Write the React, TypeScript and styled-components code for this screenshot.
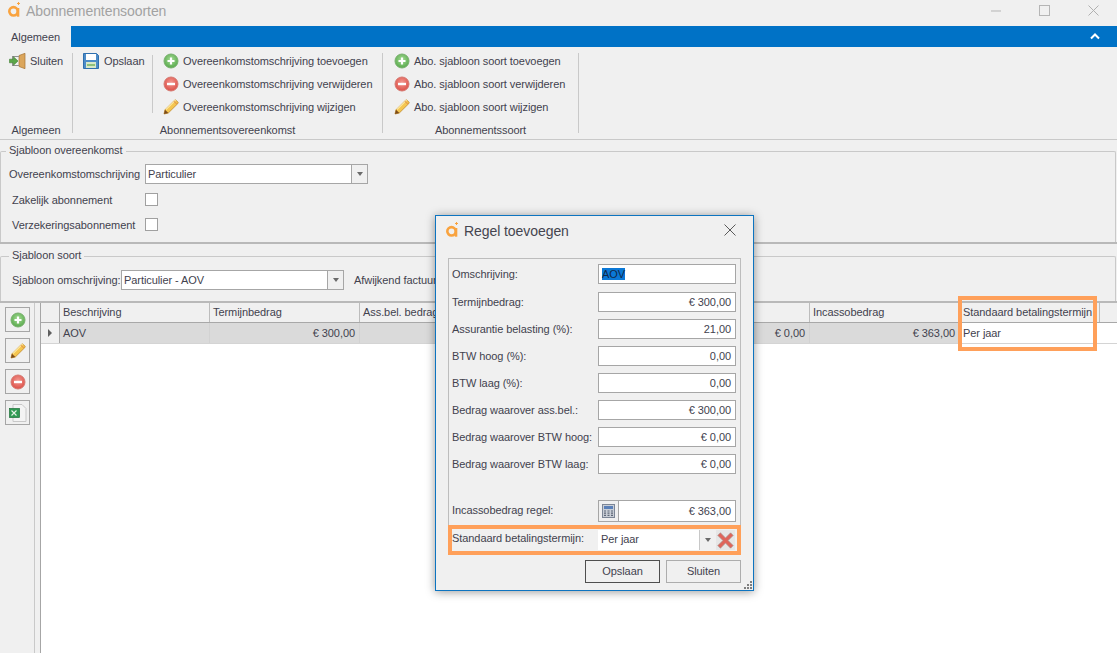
import React from "react";
import styled, { createGlobalStyle } from "styled-components";

const Global = createGlobalStyle`
  html, body { margin: 0; padding: 0; background: #f0f0f0; }
  * { box-sizing: border-box; }
`;

const TEXT = "#42424e";
const LINE = "#c9c9c9";
const BOX = "#a6a6a6";
const ORANGE = "#ffa05a";

const Page = styled.div`
  position: relative;
  width: 1117px;
  height: 653px;
  overflow: hidden;
  display: flex;
  flex-direction: column;
  background: #f0f0f0;
  color: ${TEXT};
  font: 11px/16px "Liberation Sans", Arial, sans-serif;
  letter-spacing: -0.07px;
  white-space: nowrap;
`;

const TitleBar = styled.div`
  height: 26px;
  display: flex;
  align-items: flex-start;
  padding: 2px 0 0 8px;
`;
const WindowTitle = styled.div`
  margin-left: 2px;
  font-size: 14px;
  line-height: 18px;
  color: #a2a2a2;
`;
const WindowControls = styled.div`
  margin-left: auto;
  display: flex;
  align-items: flex-start;
  gap: 38px;
  padding: 3px 18px 0 0;
  svg { display: block; }
`;

const TabBar = styled.div`
  height: 21px;
  display: flex;
`;
const Tab = styled.div`
  width: 71px;
  text-align: center;
  line-height: 23px;
`;
const TabFill = styled.div`
  flex: 1;
  background: #0072c6;
  display: flex;
  justify-content: flex-end;
  align-items: center;
  padding-right: 17px;
`;

const Ribbon = styled.div`
  height: 93px;
  display: flex;
  padding-top: 6px;
  border-bottom: 1px solid ${LINE};
  align-items: flex-start;
`;
const RibbonGroup = styled.div<{ $w: number }>`
  width: ${(p) => p.$w}px;
  height: 80px;
  display: flex;
  flex-direction: column;
  border-right: 1px solid ${LINE};
`;
const GroupBody = styled.div<{ $pad: number }>`
  flex: 1;
  display: flex;
  align-items: flex-start;
  padding-left: ${(p) => p.$pad}px;
`;
const GroupLabel = styled.div`
  height: 12px;
  margin-bottom: -3px;
  line-height: 12px;
  text-align: center;
`;
const RibbonItem = styled.div<{ $w?: number; $gap: number }>`
  height: 16px;
  ${(p) => (p.$w ? `width: ${p.$w}px;` : "")}
  display: flex;
  align-items: center;
  gap: ${(p) => p.$gap}px;
  svg { flex: none; display: block; }
`;
const ItemStack = styled.div`
  display: flex;
  flex-direction: column;
  gap: 7px;
`;
const InnerDivider = styled.div`
  width: 1px;
  height: 58px;
  margin: 2px 10px 0 0;
  background: ${LINE};
`;

const Group = styled.fieldset<{ $h: number; $legendH: number }>`
  height: ${(p) => p.$h}px;
  margin: 0 1px 0 0;
  padding: 0;
  border: 1px solid ${LINE};
  border-bottom: none;
  border-radius: 2px 2px 0 0;
  min-width: 0;
  position: relative;
  & > legend { line-height: ${(p) => p.$legendH}px; }
`;
const GroupLegend = styled.legend<{ $x: number }>`
  margin-left: ${(p) => p.$x}px;
  padding: 0 3px;
  position: relative;
  top: -1px;
`;
const Splitter = styled.div`
  height: 2px;
  flex: none;
  background: #b9b9b9;
`;
const FormRow = styled.div<{ $mt: number; $pl: number; $h: number }>`
  display: flex;
  align-items: center;
  height: ${(p) => p.$h}px;
  margin-top: ${(p) => p.$mt}px;
  padding-left: ${(p) => p.$pl}px;
`;
const FormLabel = styled.div<{ $w: number }>`
  width: ${(p) => p.$w}px;
  flex: none;
`;
const Combo = styled.div<{ $w: number }>`
  width: ${(p) => p.$w}px;
  height: 20px;
  flex: none;
  display: flex;
  background: #fff;
  border: 1px solid ${BOX};
`;
const ComboText = styled.div`
  flex: 1;
  padding-left: 2px;
  line-height: 18px;
`;
const ComboButton = styled.div`
  width: 16px;
  background: #f0f0f0;
  border-left: 1px solid ${BOX};
  display: flex;
  align-items: center;
  justify-content: center;
`;
const Arrow = styled.span`
  width: 0;
  height: 0;
  border-left: 3.5px solid transparent;
  border-right: 3.5px solid transparent;
  border-top: 4px solid #6a6a6a;
`;
const CheckBox = styled.div`
  width: 13px;
  height: 13px;
  background: #fff;
  border: 1px solid #a0a0a0;
`;
const ClippedText = styled.div`
  margin-left: 10px;
`;

const GridArea = styled.div`
  flex: 1;
  display: flex;
  min-height: 0;
`;
const SideBar = styled.div`
  width: 35px;
  flex: none;
  border-right: 1px solid ${LINE};
  padding: 4px 0 0 5px;
  display: flex;
  flex-direction: column;
  gap: 6px;
`;
const SideButton = styled.div`
  width: 25px;
  height: 25px;
  border: 1px solid ${BOX};
  display: flex;
  align-items: center;
  justify-content: center;
`;
const Table = styled.div`
  flex: 1;
  margin-left: 5px;
  background: #fff;
  border-left: 1px solid ${BOX};
  min-width: 0;
`;
const HeaderRow = styled.div`
  display: flex;
  height: 20px;
  background: #f0f0f0;
  border-bottom: 1px solid #a8a8a8;
`;
const DataRow = styled.div`
  display: flex;
  height: 21px;
  border-bottom: 1px solid #d4d4d4;
`;
const Indicator = styled.div`
  width: 19px;
  flex: none;
  background: #f0f0f0;
  border-right: 1px solid #a8a8a8;
  display: flex;
  align-items: center;
  justify-content: center;
`;
const RowTriangle = styled.span`
  width: 0;
  height: 0;
  border-top: 4px solid transparent;
  border-bottom: 4px solid transparent;
  border-left: 4px solid #5f5f5f;
`;
const HeadCell = styled.div<{ $w: number }>`
  width: ${(p) => p.$w}px;
  flex: none;
  padding-left: 3px;
  border-right: 1px solid #bcbcbc;
  line-height: 19px;
  overflow: hidden;
`;
const Cell = styled.div<{ $w: number; $right?: boolean; $plain?: boolean }>`
  width: ${(p) => p.$w}px;
  flex: none;
  padding: 0 4px 0 3px;
  text-align: ${(p) => (p.$right ? "right" : "left")};
  background: ${(p) => (p.$plain ? "#fff" : "#dadada")};
  border-right: 1px solid ${(p) => (p.$plain ? "#fff" : "#d2d2d2")};
  line-height: 20px;
`;

const Highlight = styled.div`
  position: absolute;
  left: 958px;
  top: 296px;
  width: 139px;
  height: 55px;
  border: 4px solid ${ORANGE};
`;

const Dialog = styled.div`
  position: absolute;
  left: 435px;
  top: 215px;
  width: 319px;
  height: 376px;
  background: #f0f0f0;
  border: 1px solid #0d74c0;
  box-shadow: 0 1px 9px rgba(0, 0, 0, 0.4);
  display: flex;
  flex-direction: column;
`;
const DialogHead = styled.div`
  height: 42px;
  flex: none;
  display: flex;
  align-items: flex-start;
  padding: 6px 17px 0 10px;
`;
const DialogTitle = styled.div`
  margin-left: 2px;
  font-size: 14px;
  line-height: 19px;
  color: #45454f;
`;
const CloseX = styled.div`
  margin-left: auto;
  padding-top: 2px;
  svg { display: block; }
`;
const Panel = styled.div`
  width: 293px;
  margin-left: 12px;
  flex: none;
  border: 1px solid #bdbdbd;
  border-bottom: none;
  padding-top: 5px;
`;
const DialogRow = styled.div<{ $mt: number; $h?: number }>`
  display: flex;
  height: ${(p) => p.$h ?? 20}px;
  margin-top: ${(p) => p.$mt}px;
  padding-left: 3px;
  align-items: center;
`;
const DialogLabel = styled.div<{ $lift?: number }>`
  width: 146px;
  flex: none;
  position: relative;
  top: ${(p) => -(p.$lift ?? 0)}px;
`;
const Field = styled.div<{ $right?: boolean }>`
  width: 138px;
  height: 100%;
  flex: none;
  background: #fff;
  border: 1px solid ${BOX};
  padding: 0 4px 0 3px;
  line-height: 18px;
  text-align: ${(p) => (p.$right ? "right" : "left")};
`;
const Selected = styled.span`
  background: #0a78d6;
  color: #10294a;
`;
const CalcField = styled.div`
  width: 138px;
  height: 100%;
  flex: none;
  display: flex;
  background: #fff;
  border: 1px solid ${BOX};
`;
const CalcButton = styled.div`
  width: 20px;
  flex: none;
  background: #f0f0f0;
  border-right: 1px solid ${BOX};
  display: flex;
  align-items: center;
  justify-content: center;
`;
const CalcValue = styled.div`
  flex: 1;
  text-align: right;
  padding-right: 4px;
  line-height: 20px;
`;
const OrangeRow = styled.div`
  height: 30px;
  margin: 3px -1px 0;
  border: 4px solid ${ORANGE};
  display: flex;
  align-items: center;
`;
const OrangeLabel = styled.div`
  width: 146px;
  flex: none;
  position: relative;
  top: -2px;
`;
const TermCombo = styled.div`
  width: 117px;
  height: 20px;
  flex: none;
  display: flex;
  background: #fff;
`;
const TermText = styled.div`
  flex: 1;
  padding-left: 3px;
  line-height: 19px;
`;
const TermButton = styled.div`
  width: 16px;
  background: #f0f0f0;
  border-left: 1px solid #c8c8c8;
  display: flex;
  align-items: center;
  justify-content: center;
`;
const ClearButton = styled.div`
  width: 19px;
  height: 20px;
  margin-left: 1px;
  display: flex;
  align-items: center;
  justify-content: center;
  background: #e6e6e6;
`;
const DialogButtons = styled.div`
  display: flex;
  justify-content: flex-end;
  gap: 6px;
  margin: 5px 12px 0 0;
`;
const DialogButton = styled.div<{ $primary?: boolean }>`
  width: 75px;
  height: 23px;
  text-align: center;
  line-height: 21px;
  border: 1px solid ${(p) => (p.$primary ? "#4f4f4f" : "#adadad")};
`;
const Grip = styled.svg`
  position: absolute;
  right: 0;
  bottom: 0;
  display: block;
`;

const Logo = () => (
  <svg width="16" height="16" viewBox="0 0 16 16">
    <circle cx="5.500" cy="9.300" r="4.200" fill="none" stroke="#f9a33f" strokeWidth="2.600" />
    <rect x="8.800" y="6" width="2.500" height="8.700" fill="#f9a33f" />
    <path d="M10.500 0v3M9 1.500h3" stroke="#f9a33f" strokeWidth="1" />
  </svg>
);
const PlusIcon = () => (
  <svg width="16" height="16" viewBox="0 0 16 16">
    <defs>
      <radialGradient id="gp" cx="50%" cy="40%" r="60%">
        <stop offset="0" stopColor="#a5dc95" />
        <stop offset="1" stopColor="#58a94c" />
      </radialGradient>
    </defs>
    <circle cx="8" cy="8" r="7" fill="url(#gp)" stroke="#79b06e" strokeWidth="1" />
    <path d="M8 4.500v7M4.500 8h7" stroke="#fff" strokeWidth="2.200" />
  </svg>
);
const MinusIcon = () => (
  <svg width="16" height="16" viewBox="0 0 16 16">
    <defs>
      <radialGradient id="rm" cx="50%" cy="40%" r="60%">
        <stop offset="0" stopColor="#f39a92" />
        <stop offset="1" stopColor="#dc4f47" />
      </radialGradient>
    </defs>
    <circle cx="8" cy="8" r="7" fill="url(#rm)" stroke="#d57a72" strokeWidth="1" />
    <path d="M4 8h8" stroke="#fff" strokeWidth="2.400" />
  </svg>
);
const PencilIcon = () => (
  <svg width="16" height="16" viewBox="0 0 16 16">
    <path d="M1 15l1-4.200L11.600 1.200a1 1 0 0 1 1.400 0l1.900 1.900a1 1 0 0 1 0 1.400L5.300 14z" fill="#f5c650" stroke="#c08a2c" strokeWidth="0.800" />
    <path d="M1 15l1-4.200L5.300 14z" fill="#7a4a1c" />
    <path d="M3 10.500L12.600 1" stroke="#fce8a4" strokeWidth="1.100" />
    <path d="M11 2.300l2.900 2.900" stroke="#e59c4d" strokeWidth="1.200" />
  </svg>
);
const SaveIcon = () => (
  <svg width="16" height="16" viewBox="0 0 16 16">
    <path d="M0.500 0.500h13l2 2v13h-15z" fill="#4d8cc8" stroke="#2f6fae" />
    <rect x="3" y="1" width="10" height="6" fill="#fff" />
    <rect x="3" y="9" width="10" height="6" fill="#d8e8c8" />
    <rect x="4" y="11" width="8" height="2" fill="#8fc07a" />
  </svg>
);
const ExitIcon = () => (
  <svg width="17" height="16" viewBox="0 0 17 16">
    <path d="M10 2.500l6-2.200v15.400l-6-2.200z" fill="#dba65c" stroke="#a87434" strokeWidth="0.700" />
    <path d="M3 3h7v1H4v8h6v1H3z" fill="#8f8f8f" />
    <path d="M0.500 6.200h4V3.800L9 8l-4.500 4.200V9.800h-4z" fill="#5aa648" stroke="#3f7f33" strokeWidth="0.600" />
  </svg>
);
const ExcelIcon = () => (
  <svg width="18" height="18" viewBox="0 0 18 18">
    <path d="M4 0.500h9l4 4v13H4z" fill="#f4f4f4" stroke="#c8c8c8" />
    <rect x="0.500" y="4.500" width="10" height="9" fill="#2f9a52" stroke="#1f7038" strokeWidth="0.700" />
    <path d="M2.500 6.500l5 5M7.500 6.500l-5 5" stroke="#e8f4e8" strokeWidth="1.100" />
  </svg>
);
const CalcIcon = () => (
  <svg width="13" height="14" viewBox="0 0 13 14">
    <rect x="0.500" y="0.500" width="12" height="13" fill="#c9ced6" stroke="#7c8696" />
    <rect x="2" y="2" width="9" height="3" fill="#5a80b8" />
    <path d="M2 7h2M5.500 7h2M9 7h2M2 9.200h2M5.500 9.200h2M9 9.200h2M2 11.400h2M5.500 11.400h2M9 11.400h2" stroke="#5d6676" strokeWidth="1.200" />
  </svg>
);
const RedX = () => (
  <svg width="17" height="17" viewBox="0 0 16 16">
    <path d="M0.800 3.200l2.400-2.400L8 5.600l4.800-4.800 2.400 2.400L10.400 8l4.800 4.800-2.400 2.400L8 10.400l-4.800 4.800-2.400-2.400L5.600 8z" fill="#e0645a" stroke="#a9908c" strokeWidth="0.700" />
  </svg>
);

const ribbonRows = (noun: string) => [
  { icon: <PlusIcon />, text: `${noun} toevoegen` },
  { icon: <MinusIcon />, text: `${noun} verwijderen` },
  { icon: <PencilIcon />, text: `${noun} wijzigen` },
];

const fields = [
  { label: "Termijnbedrag:", value: "€ 300,00" },
  { label: "Assurantie belasting (%):", value: "21,00" },
  { label: "BTW hoog (%):", value: "0,00" },
  { label: "BTW laag (%):", value: "0,00" },
  { label: "Bedrag waarover ass.bel.:", value: "€ 300,00" },
  { label: "Bedrag waarover BTW hoog:", value: "€ 0,00" },
  { label: "Bedrag waarover BTW laag:", value: "€ 0,00" },
];

const columns = [
  { id: "a", head: "Beschrijving", value: "AOV", right: false },
  { id: "b", head: "Termijnbedrag", value: "€ 300,00", right: true },
  { id: "c", head: "Ass.bel. bedrag", value: "", right: true },
  { id: "d", head: "", value: "", right: true },
  { id: "e", head: "", value: "€ 0,00", right: true },
  { id: "f", head: "Incassobedrag", value: "€ 363,00", right: true },
];

export default function App() {
  return (
    <Page>
      <Global />
      <TitleBar>
        <Logo />
        <WindowTitle>Abonnementensoorten</WindowTitle>
        <WindowControls>
          <svg width="10" height="11" viewBox="0 0 10 11"><path d="M0 6h10" stroke="#b5b5b5" /></svg>
          <svg width="11" height="11" viewBox="0 0 11 11"><rect x="0.500" y="0.500" width="10" height="10" fill="none" stroke="#b5b5b5" /></svg>
          <svg width="11" height="11" viewBox="0 0 11 11"><path d="M0.500 0.500l10 10M10.500 0.500l-10 10" stroke="#b0b0b0" /></svg>
        </WindowControls>
      </TitleBar>
      <TabBar>
        <Tab>Algemeen</Tab>
        <TabFill>
          <svg width="10" height="7" viewBox="0 0 10 7"><path d="M1 5.500L5 1.500l4 4" fill="none" stroke="#fff" strokeWidth="2" /></svg>
        </TabFill>
      </TabBar>
      <Ribbon>
        <RibbonGroup $w={73}>
          <GroupBody $pad={9}>
            <RibbonItem $gap={4}><ExitIcon /><span>Sluiten</span></RibbonItem>
          </GroupBody>
          <GroupLabel>Algemeen</GroupLabel>
        </RibbonGroup>
        <RibbonGroup $w={310}>
          <GroupBody $pad={10}>
            <RibbonItem $gap={5} $w={69}><SaveIcon /><span>Opslaan</span></RibbonItem>
            <InnerDivider />
            <ItemStack>
              {ribbonRows("Overeenkomstomschrijving").map((r) => (
                <RibbonItem key={r.text} $gap={4}>{r.icon}<span>{r.text}</span></RibbonItem>
              ))}
            </ItemStack>
          </GroupBody>
          <GroupLabel>Abonnementsovereenkomst</GroupLabel>
        </RibbonGroup>
        <RibbonGroup $w={196}>
          <GroupBody $pad={11}>
            <ItemStack>
              {ribbonRows("Abo. sjabloon soort").map((r) => (
                <RibbonItem key={r.text} $gap={4}>{r.icon}<span>{r.text}</span></RibbonItem>
              ))}
            </ItemStack>
          </GroupBody>
          <GroupLabel>Abonnementssoort</GroupLabel>
        </RibbonGroup>
      </Ribbon>

      <Group $h={102} $legendH={22}>
        <GroupLegend $x={5}>Sjabloon overeenkomst</GroupLegend>
        <FormRow $mt={2} $pl={8} $h={20}>
          <FormLabel $w={136}>Overeenkomstomschrijving</FormLabel>
          <Combo $w={223}>
            <ComboText>Particulier</ComboText>
            <ComboButton><Arrow /></ComboButton>
          </Combo>
        </FormRow>
        <FormRow $mt={9} $pl={11} $h={13}>
          <FormLabel $w={133}>Zakelijk abonnement</FormLabel>
          <CheckBox />
        </FormRow>
        <FormRow $mt={12} $pl={11} $h={13}>
          <FormLabel $w={133}>Verzekeringsabonnement</FormLabel>
          <CheckBox />
        </FormRow>
      </Group>
      <Splitter />
      <Group $h={57} $legendH={24}>
        <GroupLegend $x={8}>Sjabloon soort</GroupLegend>
        <FormRow $mt={2} $pl={11} $h={20}>
          <FormLabel $w={109}>Sjabloon omschrijving:</FormLabel>
          <Combo $w={223}>
            <ComboText>Particulier - AOV</ComboText>
            <ComboButton><Arrow /></ComboButton>
          </Combo>
          <ClippedText>Afwijkend factuuradres</ClippedText>
        </FormRow>
      </Group>
      <Splitter />
      <GridArea>
        <SideBar>
          <SideButton><PlusIcon /></SideButton>
          <SideButton><PencilIcon /></SideButton>
          <SideButton><MinusIcon /></SideButton>
          <SideButton><ExcelIcon /></SideButton>
        </SideBar>
        <Table>
          <HeaderRow>
            <Indicator />
            {columns.map((c) => (
              <HeadCell key={c.id} $w={150}>{c.head}</HeadCell>
            ))}
            <HeadCell $w={140}>Standaard betalingstermijn</HeadCell>
          </HeaderRow>
          <DataRow>
            <Indicator><RowTriangle /></Indicator>
            {columns.map((c) => (
              <Cell key={c.id} $w={150} $right={c.right}>{c.value}</Cell>
            ))}
            <Cell $w={133} $plain>Per jaar</Cell>
          </DataRow>
        </Table>
      </GridArea>
      <Highlight />

      <Dialog>
        <DialogHead>
          <Logo />
          <DialogTitle>Regel toevoegen</DialogTitle>
          <CloseX>
            <svg width="12" height="12" viewBox="0 0 12 12"><path d="M0.500 0.500l11 11M11.500 0.500l-11 11" stroke="#5a5a5a" /></svg>
          </CloseX>
        </DialogHead>
        <Panel>
          <DialogRow $mt={0}>
            <DialogLabel>Omschrijving:</DialogLabel>
            <Field><Selected>AOV</Selected></Field>
          </DialogRow>
          {fields.map((f, i) => (
            <DialogRow key={f.label} $mt={i === 0 ? 8 : 7}>
              <DialogLabel>{f.label}</DialogLabel>
              <Field $right>{f.value}</Field>
            </DialogRow>
          ))}
          <DialogRow $mt={26} $h={22}>
            <DialogLabel $lift={1}>Incassobedrag regel:</DialogLabel>
            <CalcField>
              <CalcButton><CalcIcon /></CalcButton>
              <CalcValue>€ 363,00</CalcValue>
            </CalcField>
          </DialogRow>
          <OrangeRow>
            <OrangeLabel>Standaard betalingstermijn:</OrangeLabel>
            <TermCombo>
              <TermText>Per jaar</TermText>
              <TermButton><Arrow /></TermButton>
            </TermCombo>
            <ClearButton><RedX /></ClearButton>
          </OrangeRow>
        </Panel>
        <DialogButtons>
          <DialogButton $primary>Opslaan</DialogButton>
          <DialogButton>Sluiten</DialogButton>
        </DialogButtons>
        <Grip width="9" height="9" viewBox="0 0 9 9">
          <path d="M6 0h2v2H6zM3 3h2v2H3zM6 3h2v2H6zM0 6h2v2H0zM3 6h2v2H3zM6 6h2v2H6z" fill="#7f7f7f" />
        </Grip>
      </Dialog>
    </Page>
  );
}
